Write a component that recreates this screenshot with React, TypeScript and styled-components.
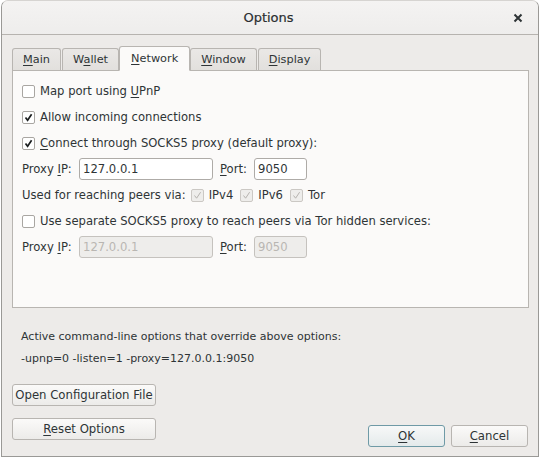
import React from "react";
import styled, { createGlobalStyle } from "styled-components";

const GlobalStyle = createGlobalStyle`
  html, body {
    margin: 0;
    padding: 0;
    background: #ffffff;
  }
  body {
    font-family: "DejaVu Sans", "Noto Sans", sans-serif;
    font-size: 11px;
    color: #2e3436;
  }
`;

const Window = styled.div`
  width: 538px;
  height: 457px;
  margin-left: 1px;
  border: 1px solid #9a9996;
  border-top-color: #d6d4d1;
  border-radius: 7px 7px 0 0;
  background: #edebe9;
  display: flex;
  flex-direction: column;
  overflow: hidden;
  box-sizing: border-box;
`;

const TitleBar = styled.div`
  height: 33px;
  flex: none;
  display: grid;
  grid-template-columns: 1fr auto 1fr;
  align-items: center;
  background: linear-gradient(#f4f3f2, #eeedec);
  border-bottom: 1px solid #b6b3af;
`;

const Title = styled.div`
  grid-column: 2;
  font-size: 13px;
  color: #2a2e30;
  padding-right: 3px;
  -webkit-text-stroke: 0.2px #2a2e30;
`;

const CloseButton = styled.div`
  grid-column: 3;
  justify-self: end;
  width: 16px;
  height: 16px;
  margin-right: 12px;
  display: flex;
  align-items: center;
  justify-content: center;
`;

const Body = styled.div`
  flex: 1;
  display: flex;
  flex-direction: column;
  padding: 11px 10px 0 10px;
`;

const TabBar = styled.div`
  display: flex;
  align-items: flex-end;
  height: 24px;
  position: relative;
  z-index: 1;
`;

const Tab = styled.div<{ $active?: boolean }>`
  height: ${(p) => (p.$active ? "25px" : "22px")};
  box-sizing: border-box;
  padding: 0 ${(p) => (p.$active ? "11px" : "10px")};
  margin-right: ${(p) => (p.$active ? "0" : "1px")};
  margin-left: ${(p) => (p.$active ? "-1px" : "0")};
  display: flex;
  align-items: center;
  justify-content: center;
  border: 1px solid #b8b5b1;
  border-bottom: ${(p) => (p.$active ? "1px solid #fbfaf9" : "none")};
  border-radius: 3px 3px 0 0;
  background: ${(p) => (p.$active ? "#fbfaf9" : "linear-gradient(#eae8e6, #e2e0dd)")};
  color: #2e3436;
  margin-bottom: ${(p) => (p.$active ? "-1px" : "0")};
  font-size: 11.3px;
`;

const Panel = styled.div`
  height: 238px;
  box-sizing: border-box;
  width: 517px;
  border: 1px solid #b8b5b1;
  background: #fbfaf9;
  padding: 7px 0 0 9px;
  display: flex;
  flex-direction: column;
`;

const Row = styled.div`
  height: 26px;
  display: flex;
  align-items: center;
  white-space: nowrap;
  font-size: 11.6px;
`;

const Box = styled.span<{ $disabled?: boolean }>`
  width: 13px;
  height: 13px;
  box-sizing: border-box;
  border: 1px solid ${(p) => (p.$disabled ? "#cbc8c4" : "#a9a6a2")};
  border-radius: 2px;
  background: ${(p) => (p.$disabled ? "#eeedeb" : "#ffffff")};
  display: inline-flex;
  align-items: center;
  justify-content: center;
  margin-right: 5px;
  flex: none;
`;

const Check = ({ on, disabled }: { on?: boolean; disabled?: boolean }) => (
  <Box $disabled={disabled}>
    {on && (
      <svg width="9" height="9" viewBox="0 0 9 9">
        <path
          d="M1.5 4.5 L3.6 7.2 L7.6 1.2"
          fill="none"
          stroke={disabled ? "#b5b2ae" : "#1c1f20"}
          strokeWidth={disabled ? 1 : 1.7}
        />
      </svg>
    )}
  </Box>
);

const U = styled.span`
  text-decoration: underline;
  text-underline-offset: 2px;
`;

const Label = styled.span<{ $gap?: number; $w?: number }>`
  margin-right: ${(p) => p.$gap ?? 0}px;
  ${(p) => (p.$w ? `width: ${p.$w}px; flex: none;` : "")}
`;

const Field = styled.div<{ $w: number; $disabled?: boolean }>`
  width: ${(p) => p.$w}px;
  height: 22px;
  box-sizing: border-box;
  border: 1px solid ${(p) => (p.$disabled ? "#c5c2be" : "#aeaba7")};
  border-radius: 3px;
  background: ${(p) => (p.$disabled ? "#eeedeb" : "#ffffff")};
  color: ${(p) => (p.$disabled ? "#b9b6b2" : "#2e3436")};
  padding-left: 3px;
  display: flex;
  align-items: center;
  margin-right: 7px;
  flex: none;
`;

const Info = styled.div`
  padding: 17px 0 0 9px;
  display: flex;
  flex-direction: column;
`;

const InfoLine = styled.div`
  height: 22px;
  display: flex;
  align-items: center;
`;

const Footer = styled.div`
  display: flex;
  justify-content: space-between;
  align-items: flex-end;
  margin-top: 15px;
`;

const LeftButtons = styled.div`
  display: flex;
  flex-direction: column;
  gap: 12px;
`;

const RightButtons = styled.div`
  display: flex;
  gap: 6px;
  margin-bottom: -7px;
`;

const Button = styled.div<{ $w: number; $focus?: boolean }>`
  width: ${(p) => p.$w}px;
  height: 22px;
  box-sizing: border-box;
  border: 1px solid ${(p) => (p.$focus ? "#6f9aa6" : "#b8b5b1")};
  border-radius: 3px;
  background: ${(p) =>
    p.$focus
      ? "linear-gradient(#f7f8f8, #e4eaeb)"
      : "linear-gradient(#fbfaf9, #ecebe9)"};
  display: flex;
  align-items: center;
  justify-content: center;
  color: #2e3436;
  white-space: nowrap;
  font-size: 11.7px;
`;

export default function App() {
  return (
    <>
      <GlobalStyle />
      <Window>
        <TitleBar>
          <Title>Options</Title>
          <CloseButton>
            <svg width="10" height="10" viewBox="0 0 10 10">
              <path d="M1.5 1.5 L8.5 8.5 M8.5 1.5 L1.5 8.5" stroke="#2e3436" strokeWidth="2" />
            </svg>
          </CloseButton>
        </TitleBar>
        <Body>
          <TabBar>
            <Tab><span><U>M</U>ain</span></Tab>
            <Tab><span>W<U>a</U>llet</span></Tab>
            <Tab $active><span><U>N</U>etwork</span></Tab>
            <Tab><span><U>W</U>indow</span></Tab>
            <Tab><span><U>D</U>isplay</span></Tab>
          </TabBar>
          <Panel>
            <Row>
              <Check />
              <Label>Map port using <U>U</U>PnP</Label>
            </Row>
            <Row>
              <Check on />
              <Label>Allow incoming connections</Label>
            </Row>
            <Row>
              <Check on />
              <Label><U>C</U>onnect through SOCKS5 proxy (default proxy):</Label>
            </Row>
            <Row>
              <Label $w={57}>Proxy <U>I</U>P:</Label>
              <Field $w={134}>127.0.0.1</Field>
              <Label $w={34}><U>P</U>ort:</Label>
              <Field $w={53}>9050</Field>
            </Row>
            <Row>
              <Label $gap={5}>Used for reaching peers via:</Label>
              <Check on disabled />
              <Label $gap={7}>IPv4</Label>
              <Check on disabled />
              <Label $gap={7}>IPv6</Label>
              <Check on disabled />
              <Label>Tor</Label>
            </Row>
            <Row>
              <Check />
              <Label>Use separate SOCKS5 proxy to reach peers via Tor hidden services:</Label>
            </Row>
            <Row>
              <Label $w={57}>Proxy <U>I</U>P:</Label>
              <Field $w={134} $disabled>127.0.0.1</Field>
              <Label $w={34}><U>P</U>ort:</Label>
              <Field $w={53} $disabled>9050</Field>
            </Row>
          </Panel>
          <Info>
            <InfoLine>Active command-line options that override above options:</InfoLine>
            <InfoLine>-upnp=0 -listen=1 -proxy=127.0.0.1:9050</InfoLine>
          </Info>
          <Footer>
            <LeftButtons>
              <Button $w={144}>Open Configuration File</Button>
              <Button $w={144}><span><U>R</U>eset Options</span></Button>
            </LeftButtons>
            <RightButtons>
              <Button $w={77} $focus><span><U>O</U>K</span></Button>
              <Button $w={77}><span><U>C</U>ancel</span></Button>
            </RightButtons>
          </Footer>
        </Body>
      </Window>
    </>
  );
}
